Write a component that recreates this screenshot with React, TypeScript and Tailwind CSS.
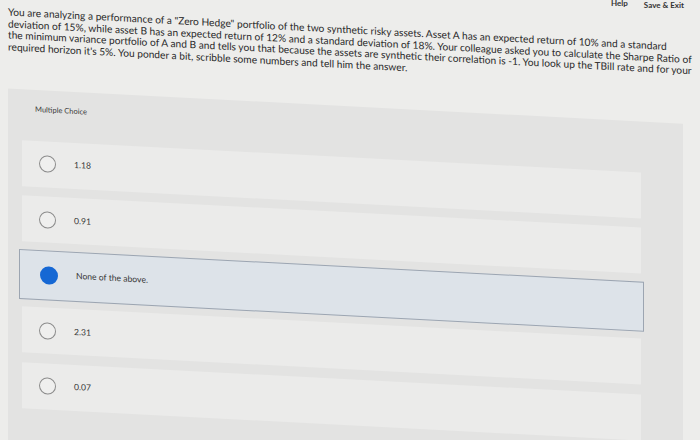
const lines = [
  'You are analyzing a performance of a "Zero Hedge" portfolio of the two synthetic risky assets. Asset A has an expected return of 10% and a standard',
  "deviation of 15%, while asset B has an expected return of 12% and a standard deviation of 18%. Your colleague asked you to calculate the Sharpe Ratio of",
  "the minimum variance portfolio of A and B and tells you that because the assets are synthetic their correlation is -1. You look up the TBill rate and for your",
  "required horizon it's 5%. You ponder a bit, scribble some numbers and tell him the answer.",
];

const options = [
  { label: "1.18", selected: false },
  { label: "0.91", selected: false },
  { label: "None of the above.", selected: true },
  { label: "2.31", selected: false },
  { label: "0.07", selected: false },
];

function Option({ label, selected }: { label: string; selected: boolean }) {
  return (
    <div
      className={
        selected
          ? "-mx-[3px] -my-[2px] flex h-[50px] items-center border border-[#9ca5b1] bg-[#dde3e9] pl-[20px]"
          : "flex h-[46px] items-center bg-[#ebebea] pl-[17px]"
      }
    >
      {selected ? (
        <span className="h-[18px] w-[18px] rounded-full bg-[#1668d4]" />
      ) : (
        <span className="h-[17px] w-[17px] rounded-full border-[1.5px] border-[#8c8c8c] bg-[#efefee]" />
      )}
      <span className="ml-[18px] text-[8.6px] text-[#363636]">{label}</span>
    </div>
  );
}

export default function App() {
  return (
    <div
      className="h-[440px] w-[700px] overflow-hidden bg-[#ededeb] text-[#2c2c2c]"
      style={{ fontFamily: "Lato, 'Open Sans', sans-serif" }}
    >
      {/* top bar, mostly cut off by the photo */}
      <div className="flex h-[6px] items-start justify-end gap-[16px] pr-[16px] text-[8px] font-bold leading-[9px] text-[#333]">
        <span className="-mt-[1px]">Help</span>
        <span className="mt-[1px]">Save &amp; Exit</span>
      </div>

      {/* the screen was photographed at a slight angle */}
      <div className="origin-top-left skew-y-[3deg]">
        <div className="px-[8px] text-[10.2px] leading-[11.7px] text-[#2a2a2a]">
          {lines.map((l) => (
            <p key={l} className="whitespace-nowrap">
              {l}
            </p>
          ))}
        </div>

        <div className="ml-[8px] mt-[35px] h-[420px] w-[675px] bg-[#e3e3e2] pt-[15px]">
          <p className="pl-[27px] text-[7.5px] leading-[9px] text-[#3a3a3a]">Multiple Choice</p>
          <div className="mt-[27px] flex w-[633px] flex-col gap-[9.5px] pl-[14px]">
            {options.map((o) => (
              <Option key={o.label} label={o.label} selected={o.selected} />
            ))}
          </div>
        </div>
      </div>
    </div>
  );
}
